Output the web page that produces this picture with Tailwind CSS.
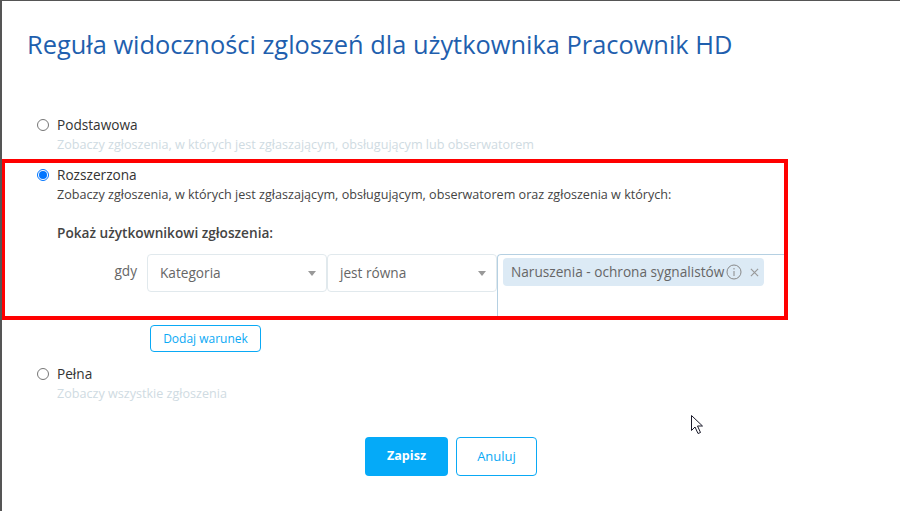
<!DOCTYPE html>
<html lang="pl">
<head>
    <meta charset="UTF-8">
    <title>Reguła widoczności</title>
    <script src="https://cdn.jsdelivr.net/npm/@tailwindcss/browser@4"></script>
</head>
<body class="bg-white">
    <div class="relative w-[900px] h-[511px] overflow-hidden bg-white font-['Open_Sans',sans-serif] border-l-2 border-t border-l-[#555] border-t-[#555]">
        <!-- Title -->
        <h1 class="ml-[25px] mt-[26px] text-[25.4px] leading-[34px] text-[#1f5fae]">Reguła widoczności zgloszeń dla użytkownika Pracownik HD</h1>

        <div class="ml-[35px] mt-[55px]">
            <!-- Podstawowa -->
            <div class="flex">
                <span class="mt-[3px] w-3 h-3 rounded-full border border-[#767676]"></span>
                <div class="ml-2">
                    <p class="text-[13.65px] leading-[18px] text-[#333]">Podstawowa</p>
                    <p class="mt-[3px] text-[12.6px] leading-4 text-[#cfdbe2]">Zobaczy zgłoszenia, w których jest zgłaszającym, obsługującym lub obserwatorem</p>
                </div>
            </div>

            <!-- Rozszerzona -->
            <div class="flex mt-[13px]">
                <span class="mt-[3px] w-3 h-3 rounded-full border border-[#0075ff] flex items-center justify-center">
                    <span class="w-2 h-2 rounded-full bg-[#0075ff]"></span>
                </span>
                <div class="ml-2">
                    <p class="text-[13.65px] leading-[18px] text-[#333]">Rozszerzona</p>
                    <p class="text-[12.6px] leading-4 mt-[3px] text-[#444]">Zobaczy zgłoszenia, w których jest zgłaszającym, obsługującym, obserwatorem oraz zgłoszenia w których:</p>
                    <p class="mt-[21px] text-[13.65px] leading-[18px] font-semibold text-[#444]">Pokaż użytkownikowi zgłoszenia:</p>
                </div>
            </div>

            <!-- Condition row -->
            <div class="flex mt-[12px] h-[63px]">
                <span class="w-[100px] mr-[10px] mt-2 text-right text-[13.65px] leading-[18px] text-[#666]">gdy</span>
                <div class="w-[180px] h-[38px] rounded border border-[#e1e9ed] flex items-center justify-between pl-3 pr-[10px] text-[13.65px] text-[#666]">
                    <span>Kategoria</span>
                    <span class="w-0 h-0 border-x-4 border-t-[5px] border-x-transparent border-t-[#999]"></span>
                </div>
                <div class="w-[170px] h-[38px] rounded border border-[#e1e9ed] flex items-center justify-between pl-3 pr-[10px] text-[13.65px] text-[#666]">
                    <span>jest równa</span>
                    <span class="w-0 h-0 border-x-4 border-t-[5px] border-x-transparent border-t-[#999]"></span>
                </div>
                <div class="w-[290px] h-[63px] rounded-tl border-l border-t border-[#b5d0e2] pl-[5px] pt-[3px]">
                    <div class="w-[261px] h-7 rounded bg-[#dceaf5] flex items-center pl-2 text-[13.65px] text-[#666]">
                        <span class="whitespace-nowrap">Naruszenia - ochrona sygnalistów</span>
                        <svg class="w-4 h-4 ml-[2px] shrink-0" viewBox="0 0 16 16" fill="none" stroke="#888">
                            <circle cx="8" cy="8" r="7"></circle>
                            <path d="M8 7v5M8 4v1.500"></path>
                        </svg>
                        <svg class="w-[9px] h-[9px] ml-[8px] shrink-0" viewBox="0 0 10 10" fill="none" stroke="#999" stroke-width="1.300">
                            <path d="M1 1l8 8M9 1l-8 8"></path>
                        </svg>
                    </div>
                </div>
            </div>

            <button class="block ml-[113px] mt-[8px] w-[111px] h-[27px] rounded border border-[#0aa9f5] text-[12px] font-medium text-[#0aa9f5]">Dodaj warunek</button>

            <!-- Pełna -->
            <div class="flex mt-[13px]">
                <span class="mt-[3px] w-3 h-3 rounded-full border border-[#767676]"></span>
                <div class="ml-2">
                    <p class="text-[13.65px] leading-[18px] text-[#333]">Pełna</p>
                    <p class="mt-[3px] text-[12.6px] leading-4 text-[#cfdbe2]">Zobaczy wszystkie zgłoszenia</p>
                </div>
            </div>
        </div>

        <!-- Buttons -->
        <div class="flex gap-2 ml-[363px] mt-[35px]">
            <button class="w-[83px] h-[39px] rounded bg-[#05aaf8] text-[12.6px] font-bold text-white">Zapisz</button>
            <button class="w-[81px] h-[39px] rounded border border-[#0aa9f5] text-[13px] text-[#0aa9f5]">Anuluj</button>
        </div>

        <!-- Red annotation frame -->
        <div class="absolute left-[-1px] top-[158px] w-[787px] h-[161px] border-4 border-[#f00]"></div>

        <!-- Mouse cursor -->
        <svg class="absolute left-[688px] top-[413px] w-[14px] h-[21px]" viewBox="0 0 14 21" fill="#fff" stroke="#1a1a2a">
            <path d="M1.500 1.500v15l3.500-3.500 3 6.500 2.500-1-3-6.500h5z"></path>
        </svg>
    </div>
</body>
</html>
